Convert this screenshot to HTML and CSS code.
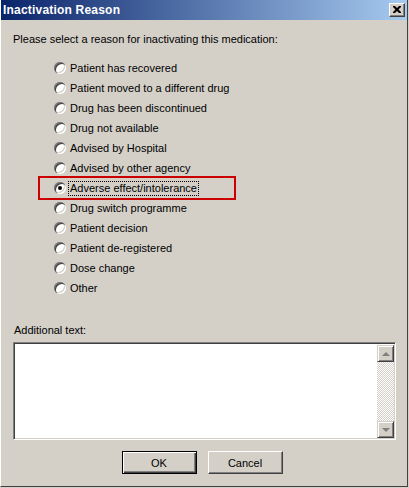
FILE: index.html
```html
<!DOCTYPE html>
<html lang="en">
<head>
    <meta charset="UTF-8"/>
    <title>Inactivation Reason</title>
    <link rel="stylesheet" href="styles.css">
</head>
<body>
<div class="window">
    <div class="titlebar">
        <span class="title">Inactivation Reason</span>
        <span class="close-btn">
            <svg width="8" height="7" viewBox="0 0 8 7"><path d="M0 0h2l2 2 2-2h2v1l-2.5 2.5L8 6v1H6L4 5 2 7H0V6l2.5-2.5L0 1z" fill="#000"/></svg>
        </span>
    </div>
    <div class="content">
        <div class="prompt">Please select a reason for inactivating this medication:</div>
        <div class="reasons">
            <div class="reason"><span class="radio"></span><span class="label">Patient has recovered</span></div>
            <div class="reason"><span class="radio"></span><span class="label">Patient moved to a different drug</span></div>
            <div class="reason"><span class="radio"></span><span class="label">Drug has been discontinued</span></div>
            <div class="reason"><span class="radio"></span><span class="label">Drug not available</span></div>
            <div class="reason"><span class="radio"></span><span class="label">Advised by Hospital</span></div>
            <div class="reason"><span class="radio"></span><span class="label">Advised by other agency</span></div>
            <div class="reason selected"><span class="radio checked"></span><span class="label focus">Adverse effect/intolerance</span></div>
            <div class="reason"><span class="radio"></span><span class="label">Drug switch programme</span></div>
            <div class="reason"><span class="radio"></span><span class="label">Patient decision</span></div>
            <div class="reason"><span class="radio"></span><span class="label">Patient de-registered</span></div>
            <div class="reason"><span class="radio"></span><span class="label">Dose change</span></div>
            <div class="reason"><span class="radio"></span><span class="label">Other</span></div>
            <div class="highlight"></div>
        </div>
        <div class="extra-label">Additional text:</div>
        <div class="textbox">
            <div class="text-area"></div>
            <div class="scrollbar">
                <span class="scroll-btn"><span class="arrow up"></span></span>
                <span class="track"></span>
                <span class="scroll-btn"><span class="arrow down"></span></span>
            </div>
        </div>
        <div class="buttons">
            <span class="btn default">OK</span>
            <span class="btn">Cancel</span>
        </div>
    </div>
</div>
</body>
</html>
```
FILE: styles.css
```css
body {
    margin: 0;
    background-color: #D4D0C8;
    font-family: "Liberation Sans", Arial, sans-serif;
    font-size: 11px;
    color: #000;
}
.window {
    width: 408px;
    height: 487px;
    box-sizing: border-box;
    background-color: #D4D0C8;
    border-left: 1px solid #fff;
    border-right: 1px solid #404040;
    border-bottom: 1px solid #404040;
}
.titlebar {
    height: 20px;
    background: linear-gradient(to right, #0A246A, #A6CAF0);
    display: flex;
    align-items: center;
    justify-content: space-between;
    padding: 0 2px 0 2px;
}
.title {
    color: #fff;
    font-weight: bold;
    font-size: 12px;
    letter-spacing: 0.2px;
}
.close-btn {
    width: 16px;
    height: 14px;
    box-sizing: border-box;
    background-color: #D4D0C8;
    border-top: 1px solid #fff;
    border-left: 1px solid #fff;
    border-right: 1px solid #404040;
    border-bottom: 1px solid #404040;
    box-shadow: inset -1px -1px 0 #808080;
    display: flex;
    align-items: center;
    justify-content: center;
    padding: 0 1px 1px 0;
}
.content {
    padding: 13px 0 0 12px;
}
.prompt {
    line-height: 13px;
}
.reasons {
    position: relative;
    margin-top: 12px;
    padding-left: 41px;
}
.reason {
    height: 20px;
    display: flex;
    align-items: center;
}
.radio {
    position: relative;
    width: 12px;
    height: 12px;
    border-radius: 50%;
    background-color: #fff;
    box-shadow: inset 1px 1px 0 #808080, inset 2px 2px 0 #404040, inset -1px -1px 0 #fff, inset -2px -2px 0 #D4D0C8;
    margin-right: 3px;
    flex: none;
}
.radio.checked::after {
    content: "";
    position: absolute;
    left: 4px;
    top: 4px;
    width: 4px;
    height: 4px;
    border-radius: 50%;
    background-color: #000;
}
.label {
    line-height: 13px;
    padding: 0 1px;
    border: 1px solid transparent;
    margin-left: -1px;
}
.label.focus {
    border: 1px dotted #000;
}
.highlight {
    position: absolute;
    left: 25px;
    top: 118px;
    width: 194px;
    height: 20px;
    border: 2px solid #CC0000;
}
.extra-label {
    margin-top: 26px;
    line-height: 13px;
    padding-left: 1px;
}
.textbox {
    margin-top: 5px;
    width: 383px;
    height: 98px;
    box-sizing: border-box;
    display: flex;
    background-color: #fff;
    border-top: 1px solid #808080;
    border-left: 1px solid #808080;
    border-right: 1px solid #fff;
    border-bottom: 1px solid #fff;
    box-shadow: inset 1px 1px 0 #404040, inset -1px -1px 0 #D4D0C8;
    padding: 2px 1px 1px 2px;
}
.text-area {
    flex: 1;
}
.scrollbar {
    width: 17px;
    display: flex;
    flex-direction: column;
}
.scroll-btn {
    height: 17px;
    box-sizing: border-box;
    background-color: #D4D0C8;
    border-top: 1px solid #D4D0C8;
    border-left: 1px solid #D4D0C8;
    border-right: 1px solid #404040;
    border-bottom: 1px solid #404040;
    box-shadow: inset 1px 1px 0 #fff, inset -1px -1px 0 #808080;
    display: flex;
    align-items: center;
    justify-content: center;
}
.track {
    flex: 1;
    background-image: repeating-conic-gradient(#fff 0 25%, #D4D0C8 0 50%);
    background-size: 2px 2px;
}
.arrow {
    width: 0;
    height: 0;
    border-left: 4px solid transparent;
    border-right: 4px solid transparent;
}
.arrow.up {
    border-bottom: 4px solid #808080;
}
.arrow.down {
    border-top: 4px solid #808080;
}
.buttons {
    margin-top: 11px;
    display: flex;
    justify-content: center;
    gap: 11px;
    padding-right: 16px;
}
.btn {
    width: 75px;
    height: 23px;
    box-sizing: border-box;
    display: flex;
    align-items: center;
    justify-content: center;
    background-color: #D4D0C8;
    border-top: 1px solid #fff;
    border-left: 1px solid #fff;
    border-right: 1px solid #404040;
    border-bottom: 1px solid #404040;
    box-shadow: inset -1px -1px 0 #808080;
}
.btn.default {
    border: 1px solid #000;
    box-shadow: inset 1px 1px 0 #fff, inset -1px -1px 0 #404040, inset -2px -2px 0 #808080;
}
```
